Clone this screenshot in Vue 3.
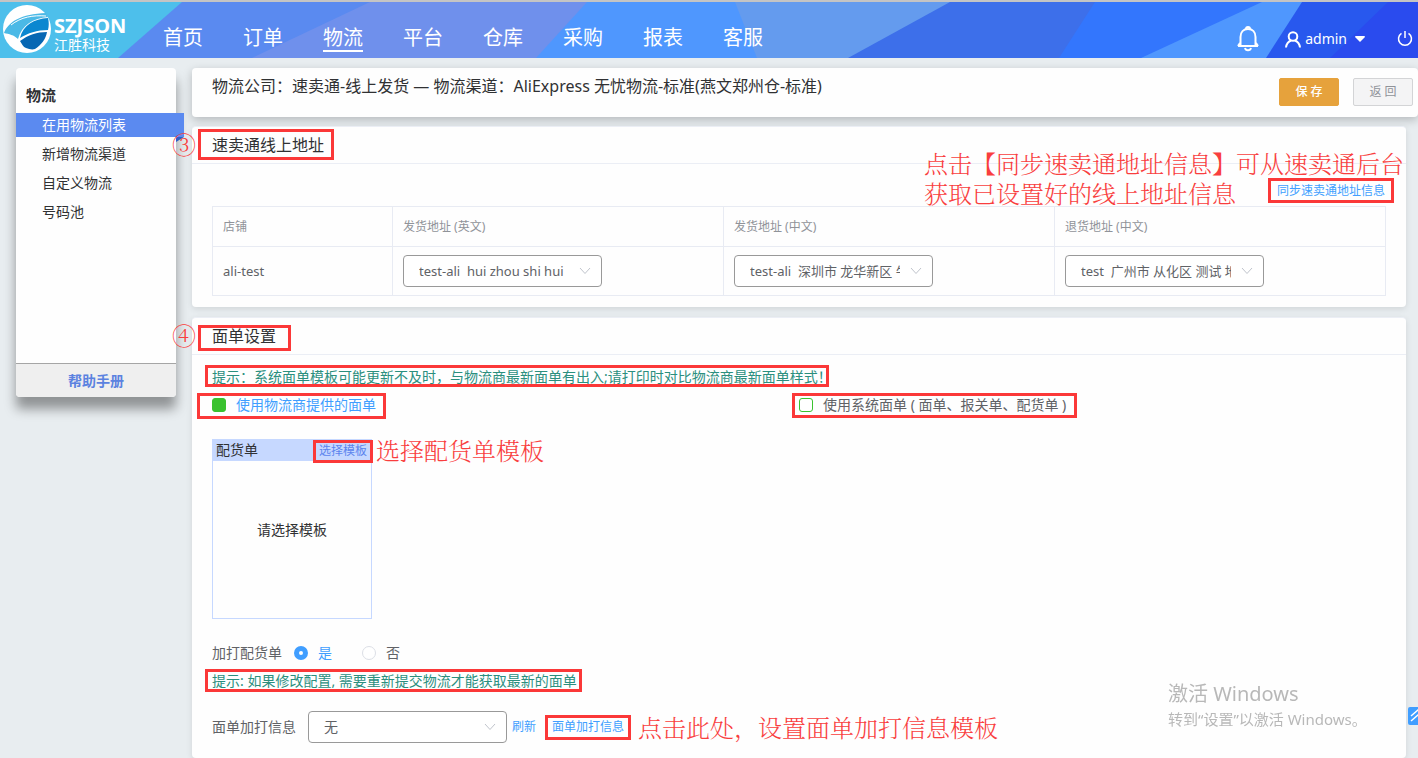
<script setup>
import { ref } from 'vue'

const navItems = ['首页', '订单', '物流', '平台', '仓库', '采购', '报表', '客服']
const sideItems = ['在用物流列表', '新增物流渠道', '自定义物流', '号码池']
const addresses = [
  { id: 'ship-en', title: '发货地址 (英文)', value: 'test-ali\u00a0 hui zhou shi hui' },
  { id: 'ship-cn', title: '发货地址 (中文)', value: 'test-ali\u00a0 深圳市 龙华新区 牛栏前' },
  { id: 'return-cn', title: '退货地址 (中文)', value: 'test\u00a0 广州市 从化区 测试 地址' }
]
const useCarrier = ref(true)
const useSystem = ref(false)
const extraPrint = ref('yes')
</script>

<template>
  <div class="page">
    <header class="topbar">
      <svg class="topbar-bg" viewBox="0 0 1418 56" preserveAspectRatio="none" aria-hidden="true">
        <rect width="1418" height="56" fill="#4dbfeb" />
        <path d="M182 0H1418V56H118Z" fill="#5a8af0" />
        <path d="M370 0H1418V56H252Z" fill="#6f90ec" />
        <path d="M587 0H1418V56H536Z" fill="#4f97fe" />
        <path d="M735 0H1418V56H757Z" fill="#649bee" />
        <path d="M950 0H1418V56H848Z" fill="#3d6fea" />
        <path d="M1095 0H1418V56H1059Z" fill="#3376fd" />
        <path d="M1262 0H1418V56H1141Z" fill="#4f97fe" />
        <path d="M1302 0H1418V56H1266Z" fill="#2858ee" />
        <path d="M1388 0H1418V56H1330Z" fill="#2a4bee" />
      </svg>
      <a class="brand" href="#">
        <svg width="48" height="48" viewBox="0 0 48 48" aria-hidden="true">
          <circle cx="24" cy="24" r="24" fill="#fff" />
          <path d="M1 28C5 17 18 9 43 8L45 12C30 13 19 20 15 34C11 30 6 29 1 28Z" fill="#4bb9e6" />
          <path d="M8 20C18 12 30 10 43 11" fill="none" stroke="#fff" stroke-width="1" />
          <path d="M17 33C20 20 31 14 45 13C46 17 46 21 45 25C34 25 25 28 17 33Z" fill="#0b87d0" />
          <path d="M17 36C25 30 34 27 44 27C43 34 38 40 32 44C29 45 26 44 23 43C20 42 19 39 17 36Z" fill="#0767b3" />
        </svg>
        <span class="brand-text"><b>SZJSON</b><span>江胜科技</span></span>
      </a>
      <nav class="nav">
        <a v-for="n in navItems" :key="n" href="#" :class="{ active: n === '物流' }"><span>{{ n }}</span></a>
      </nav>
      <div class="tools">
        <button class="icon-btn" aria-label="通知">
          <svg width="22" height="26" viewBox="0 0 22 26" fill="none" stroke="#fff" stroke-width="2">
            <path d="M1 20H21M3.500 20V11C3.500 6 6.500 3 11 3S18.500 6 18.500 11V20M3 17L1 20M19 17L21 20" />
            <path d="M9 3C9 1.300 9.800 1 11 1S13 1.300 13 3M8 22C8.500 24 9.500 24.300 11 24.300S13.500 24 14 22" />
          </svg>
        </button>
        <button class="user">
          <svg width="16" height="17" viewBox="0 0 16 17" fill="none" stroke="#fff" stroke-width="2">
            <circle cx="8" cy="5.500" r="4.300" />
            <path d="M1 16.500C1.500 12.500 3.500 10.500 6 9.500M15 16.500C14.500 12.500 12.500 10.500 10 9.500" />
          </svg>
          <span>admin</span>
          <svg width="10" height="6" viewBox="0 0 10 6"><path d="M0 1Q0 0 1 0H9Q10 0 10 1L5 6Z" fill="#fff" /></svg>
        </button>
        <button class="icon-btn" aria-label="退出">
          <svg width="16" height="16" viewBox="0 0 16 16" fill="none" stroke="#fff" stroke-width="1.500">
            <path d="M8 0V7M4.500 2.300A6.500 6.500 0 1 0 11.500 2.300" />
          </svg>
        </button>
      </div>
    </header>

    <div class="body">
      <aside class="side">
        <h2>物流</h2>
        <ul>
          <li v-for="(s, i) in sideItems" :key="s"><a href="#" :class="{ current: i === 0 }">{{ s }}</a></li>
        </ul>
        <a class="help" href="#">帮助手册</a>
      </aside>

      <main class="main">
        <div class="titlebar">
          <h1>物流公司：速卖通-线上发货 — 物流渠道：AliExpress 无忧物流-标准(燕文郑州仓-标准)</h1>
          <button class="btn save">保 存</button>
          <button class="btn back">返 回</button>
        </div>

        <section class="card address">
          <h2>速卖通线上地址</h2>
          <div class="sync"><a href="#">同步速卖通地址信息</a></div>
          <table>
            <thead>
              <tr>
                <th class="shop">店铺</th>
                <th v-for="a in addresses" :key="a.id"><label :for="a.id">{{ a.title }}</label></th>
              </tr>
            </thead>
            <tbody>
              <tr>
                <td>ali-test</td>
                <td v-for="a in addresses" :key="a.id">
                  <span class="select">
                    <select :id="a.id"><option>{{ a.value }}</option></select>
                    <svg width="12" height="8" viewBox="0 0 12 8"><path d="M1 1L6 6.500L11 1" /></svg>
                  </span>
                </td>
              </tr>
            </tbody>
          </table>
          <span class="num">③</span>
          <i class="frame f-address"></i>
          <i class="frame f-sync"></i>
          <p class="note n-sync">点击【同步速卖通地址信息】可从速卖通后台<br>获取已设置好的线上地址信息</p>
        </section>

        <section class="card label">
          <h2>面单设置</h2>
          <div class="content">
            <p class="hint">提示：系统面单模板可能更新不及时，与物流商最新面单有出入;请打印时对比物流商最新面单样式！</p>
            <div class="options">
              <label class="on"><input v-model="useCarrier" type="checkbox"><span>使用物流商提供的面单</span></label>
              <label><input v-model="useSystem" type="checkbox"><span>使用系统面单 ( 面单、报关单、配货单 )</span></label>
            </div>
            <div class="template">
              <div class="template-head"><span>配货单</span><a href="#">选择模板</a></div>
              <div class="template-body">请选择模板</div>
            </div>
            <fieldset class="radios">
              <legend>加打配货单</legend>
              <label class="on"><input v-model="extraPrint" type="radio" value="yes" name="extra"><span>是</span></label>
              <label><input v-model="extraPrint" type="radio" value="no" name="extra"><span>否</span></label>
            </fieldset>
            <p class="hint">提示: 如果修改配置, 需要重新提交物流才能获取最新的面单</p>
            <div class="extra">
              <label for="extra-info">面单加打信息</label>
              <span class="select">
                <select id="extra-info"><option>无</option></select>
                <svg width="12" height="8" viewBox="0 0 12 8"><path d="M1 1L6 6.500L11 1" /></svg>
              </span>
              <a href="#">刷新</a>
              <a class="info" href="#">面单加打信息</a>
            </div>
          </div>
          <span class="num">④</span>
          <i class="frame f-label"></i>
          <i class="frame f-hint"></i>
          <i class="frame f-carrier"></i>
          <i class="frame f-system"></i>
          <i class="frame f-template"></i>
          <i class="frame f-resubmit"></i>
          <i class="frame f-info"></i>
          <p class="note n-template">选择配货单模板</p>
          <p class="note n-info">点击此处，设置面单加打信息模板</p>
        </section>
      </main>
    </div>

    <div class="watermark"><strong>激活 Windows</strong><span>转到“设置”以激活 Windows。</span></div>
    <button class="to-top" aria-label="返回顶部">
      <svg width="16" height="14" viewBox="0 0 16 14" fill="none" stroke="#fff" stroke-width="1.500"><path d="M1 7L8 1L15 7M1 12L8 6L15 12" /></svg>
    </button>
  </div>
</template>

<style>
body {
  margin: 0;
  background: #e8edf0;
}
</style>

<style scoped>
.page {
  position: relative;
  display: flex;
  flex-direction: column;
  height: 100vh;
  overflow: hidden;
  background: #e8edf0;
  color: #303133;
  font: 14px/20px "Noto Sans", "Noto Sans CJK SC", sans-serif;
}
.page *, .page *::before, .page *::after { box-sizing: border-box; }
h1, h2, p, ul { margin: 0; padding: 0; }
h1, h2 { font-weight: 400; }
ul { list-style: none; }
a { color: #409eff; text-decoration: none; }
button, select, input { font: inherit; margin: 0; }
svg { display: block; flex: none; }

.topbar {
  position: relative;
  display: flex;
  flex: none;
  height: 58px;
  border-top: 2px solid #c4c4c4;
  color: #fff;
}
.topbar-bg { position: absolute; inset: 0; width: 100%; height: 100%; }
.brand, .nav, .tools { position: relative; display: flex; }
.brand { width: 143px; padding: 3px 0 0 3px; gap: 3px; color: #fff; }
.brand-text { display: flex; flex-direction: column; padding-top: 11px; line-height: 19px; }
.brand-text b { font-size: 20px; }
.nav a { padding: 22px 20px 0; color: #fff; font-size: 20px; line-height: 26px; }
.nav span { display: block; height: 28px; }
.nav .active span { border-bottom: 2px solid #fff; }
.nav span { line-height: 28px; }
.tools { margin-left: auto; align-items: center; padding: 18px 5px 0 0; gap: 26px; }
.tools button { display: flex; align-items: center; padding: 0; border: 0; background: none; color: #fff; }
.tools .user { gap: 4px; margin-right: 6px; }
.user span { margin-right: 4px; }

.body { display: flex; flex: 1; padding: 10px 0 0 16px; gap: 16px; }
.side {
  display: flex;
  flex: none;
  flex-direction: column;
  align-self: flex-start;
  width: 160px;
  height: 329px;
  border-radius: 4px;
  background: #fefefe;
  box-shadow: 0 12px 12px rgba(0, 0, 0, .38);
}
.side h2 { padding: 17px 10px 8px; font-size: 15px; font-weight: 700; line-height: 20px; }
.side ul { display: flex; flex-direction: column; gap: 5px; }
.side li a { display: block; padding-left: 26px; color: #303133; line-height: 24px; }
.side li .current { position: relative; width: 168px; background: #5b8af0; color: #fff; }
.side .current::after {
  content: "";
  position: absolute;
  top: 100%;
  right: 0;
  border-top: 5px solid #2f5fc4;
  border-right: 8px solid transparent;
}
.help {
  margin-top: auto;
  border-top: 1px solid #a5a5a5;
  border-radius: 0 0 4px 4px;
  background: #efefef;
  color: #5b82e0;
  font-weight: 700;
  line-height: 33px;
  text-align: center;
}

.main { display: flex; flex: 1; flex-direction: column; min-width: 0; }
.titlebar {
  display: flex;
  flex: none;
  height: 49px;
  padding: 10px 5px 0 20px;
  border-radius: 4px;
  background: #fefefe;
  box-shadow: 0 3px 10px rgba(0, 0, 0, .22);
}
.titlebar h1 { flex: 1; font-size: 16px; line-height: 16px; }
.btn { width: 60px; height: 28px; margin-left: 14px; padding: 0; border: 1px solid #e6a23c; border-radius: 2px; font-size: 12px; line-height: 26px; }
.save { background: #e6a23c; color: #fff; font-weight: 500; }
.back { border-color: #d3d4d6; background: #f4f4f5; color: #909399; }

.card {
  position: relative;
  margin: 9px 12px 0 0;
  border-radius: 4px;
  border-top: 1px solid #ebeef5;
  background: #fefefe;
  box-shadow: 0 2px 6px rgba(0, 0, 0, .1);
}
.card h2 { padding: 0 20px; border-bottom: 1px solid #ebeef5; font-size: 16px; line-height: 36px; }
.address { height: 181px; }
.label { flex: 1; margin-top: 10px; }
.sync { padding: 17px 21px 5px; font-size: 12px; text-align: right; }
table {
  width: calc(100% - 40px);
  margin: 0 20px;
  border-collapse: collapse;
  table-layout: fixed;
  font-size: 12px;
}
th, td { height: 49px; padding: 0 10px; border: 1px solid #e8ebf3; text-align: left; color: #606266; }
td { font-size: 13px; }
th { height: 40px; color: #909399; font-weight: 400; }
.shop { width: 180px; }

.select { position: relative; display: block; width: 199px; }
.select select {
  display: block;
  width: 100%;
  height: 32px;
  padding: 0 32px 0 15px;
  border: 1px solid #999;
  border-radius: 4px;
  appearance: none;
  background: #fff;
  color: #606266;
  font-size: 13px;
}
.select svg { position: absolute; top: 12px; right: 11px; fill: none; stroke: #c0c4cc; stroke-width: 1px; }

.content { padding: 12px 20px; color: #606266; }
.hint { color: #2b8f7e; }
.options { display: grid; grid-template-columns: 1fr 1fr; padding: 8px 0 24px; }
.options label { display: flex; align-items: center; gap: 10px; }
.on { color: #409eff; }
input[type="checkbox"] { width: 14px; height: 14px; border: 1px solid #3ac22f; border-radius: 3px; appearance: none; background: #fff; }
input[type="checkbox"]:checked { background: #3ac22f; }
.template { width: 160px; height: 180px; border: 1px solid #c6d8ff; color: #303133; }
.template-head { display: flex; justify-content: space-between; height: 21px; padding: 0 4px 0 3px; background: #c6d8ff; }
.template-head a { color: #5b84ee; font-size: 12px; line-height: 22px; }
.template-body { padding-top: 59px; text-align: center; }
.radios { display: flex; margin: 24px 0 8px; padding: 0; border: 0; }
.radios legend { float: left; padding: 0; width: 82px; }
.radios label { display: flex; align-items: center; gap: 10px; margin-right: 30px; }
input[type="radio"] { width: 14px; height: 14px; border: 1px solid #dcdfe6; border-radius: 50%; appearance: none; background: #fff; }
input[type="radio"]:checked { border: 5px solid #409eff; }
.extra { display: flex; align-items: center; margin-top: 20px; }
.extra .select { margin: 0 5px 0 12px; }
.extra option, .extra select { font-size: 14px; }
.extra a { font-size: 12px; }
.extra .info { margin-left: 16px; }

/* Annotations lying over the cards */
.frame { position: absolute; border: 3px solid #fb3838; pointer-events: none; }
.num, .note { position: absolute; color: #f93e3e; font: 400 24px/30px "Noto Serif CJK SC", "Liberation Serif", "Noto Sans CJK SC", serif; font-weight: 300; white-space: nowrap; }
.num { top: 2px; left: -20px; }
.f-address { top: 2px; left: 6px; width: 136px; height: 31px; }
.f-sync { top: 51px; right: 12px; width: 126px; height: 25px; }
.n-sync { top: 21px; right: 2px; }
.f-label { top: 7px; left: 6px; width: 93px; height: 26px; }
.f-hint { top: 47px; left: 13px; width: 624px; height: 22px; }
.f-carrier { top: 75px; left: 5px; width: 189px; height: 26px; }
.f-system { top: 75px; left: calc(50% - 7px); width: 285px; height: 25px; }
.f-template { top: 122px; left: 121px; width: 60px; height: 23px; }
.f-resubmit { top: 351px; left: 13px; width: 377px; height: 23px; }
.f-info { top: 397px; left: 353px; width: 86px; height: 25px; }
.n-template { top: 117px; left: 184px; }
.n-info { top: 394px; left: 446px; }

.watermark {
  position: fixed;
  right: 47px;
  bottom: 28px;
  display: flex;
  flex-direction: column;
  width: 203px;
  color: #b8b8b8;
  white-space: nowrap;
  pointer-events: none;
}
.watermark strong { font-size: 20px; font-weight: 400; line-height: 28px; }
.watermark span { font-size: 15px; line-height: 22px; }
.to-top {
  position: fixed;
  right: -10px;
  bottom: 33px;
  width: 20px;
  height: 18px;
  padding: 2px;
  border: 0;
  border-radius: 2px;
  background: #409eff;
}
</style>
